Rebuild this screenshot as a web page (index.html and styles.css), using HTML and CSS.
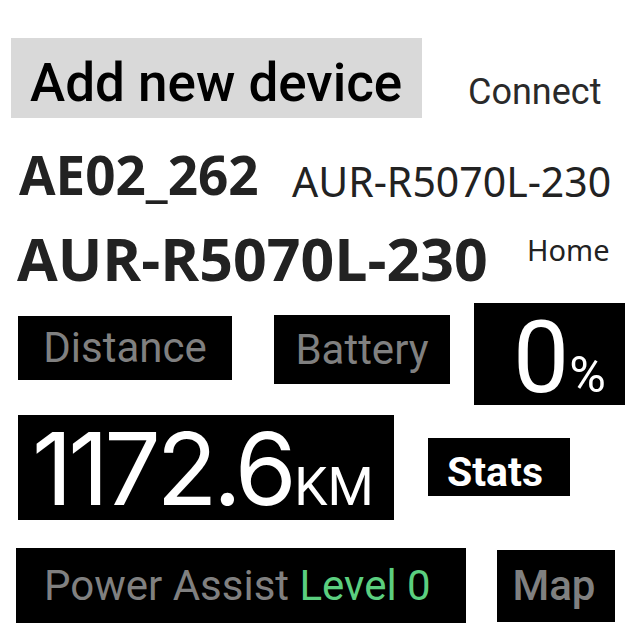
FILE: index.html
```html
<!DOCTYPE html>
<html>
<head>
<meta charset="utf-8">
<link rel="stylesheet" href="styles.css">
</head>
<body>
<div class="page">
  <div class="row r1">
    <div class="add">Add new device</div>
    <div class="connect">Connect</div>
  </div>
  <div class="row r2">
    <div class="dev-id">AE02_262</div>
    <div class="dev-model">AUR-R5070L-230</div>
  </div>
  <div class="row r3">
    <div class="dev-title">AUR-R5070L-230</div>
    <div class="home">Home</div>
  </div>
  <div class="row r4">
    <div class="tile label distance">Distance</div>
    <div class="tile label battery">Battery</div>
    <div class="tile pct"><span class="big">0</span><span class="unit">%</span></div>
  </div>
  <div class="row r5">
    <div class="tile km"><span class="big nums">1172.6</span><span class="unit-km">KM</span></div>
    <div class="tile stats">Stats</div>
  </div>
  <div class="row r6">
    <div class="tile label power">Power Assist&nbsp;<span class="level">Level 0</span></div>
    <div class="tile label map">Map</div>
  </div>
</div>
</body>
</html>
```
FILE: styles.css
```css
html, body {
  margin: 0;
  padding: 0;
  background: #ffffff;
}
.page {
  width: 640px;
  height: 640px;
  padding-top: 38px;
  box-sizing: border-box;
  font-family: Roboto, "Liberation Sans", sans-serif;
  overflow: hidden;
}
.row {
  display: flex;
  align-items: flex-start;
}
.r1 { height: 80px; }
.add {
  margin-left: 11px;
  width: 411px;
  height: 80px;
  box-sizing: border-box;
  background: #d9d9d9;
  color: #000;
  font-size: 53px;
  font-weight: 500;
  letter-spacing: 0;
  line-height: 70px;
  padding-top: 10px;
  padding-left: 19px;
  white-space: nowrap;
}
.connect {
  margin-left: 46px;
  margin-top: 36px;
  font-size: 36px;
  line-height: 36px;
  color: #2a2a2a;
}
.r2 { height: 92px; }
.dev-id {
  margin-left: 19px;
  width: 273px;
  margin-top: 30px;
  font-family: "Open Sans", "Noto Sans", sans-serif;
  font-weight: 700;
  font-size: 53px;
  line-height: 53px;
  color: #222;
  white-space: nowrap;
}
.dev-model {
  margin-top: 43px;
  font-family: "Noto Sans", "Open Sans", sans-serif;
  font-size: 41px;
  line-height: 41px;
  color: #222;
  white-space: nowrap;
}
.r3 { height: 90px; }
.dev-title {
  margin-left: 17px;
  width: 510px;
  margin-top: 18px;
  font-family: "Open Sans", "Noto Sans", sans-serif;
  font-weight: 700;
  font-size: 59px;
  line-height: 60px;
  color: #222;
  white-space: nowrap;
}
.home {
  margin-top: 25px;
  font-family: "Noto Sans", "Open Sans", sans-serif;
  font-size: 29px;
  line-height: 29px;
  color: #222;
}
.tile {
  background: #000;
  display: flex;
  align-items: center;
  justify-content: center;
  box-sizing: border-box;
  white-space: nowrap;
}
.label {
  color: #808080;
  font-size: 42px;
  line-height: 42px;
}
.r4 { height: 105px; }
.distance {
  margin-left: 18px;
  margin-top: 16px;
  width: 214px;
  height: 64px;
}
.battery {
  margin-left: 42px;
  margin-top: 15px;
  width: 176px;
  height: 69px;
}
.pct {
  margin-left: 24px;
  margin-top: 3px;
  width: 151px;
  height: 102px;
  display: block;
  padding-top: 5px;
  padding-left: 39px;
  color: #fff;
  font-size: 100px;
  line-height: 100px;
}
.unit {
  font-size: 50px;
}
.r5 { height: 115px; }
.km {
  margin-left: 18px;
  margin-top: 10px;
  width: 376px;
  height: 105px;
  display: block;
  padding-top: 4px;
  padding-left: 14px;
  color: #fff;
  font-size: 100px;
  line-height: 100px;
}
.nums {
  font-family: Inter, Roboto, sans-serif;
  font-weight: 400;
  letter-spacing: -4.5px;
}
.unit-km {
  font-size: 53px;
  margin-left: 2px;
}
.stats {
  margin-left: 34px;
  margin-top: 33px;
  width: 142px;
  height: 58px;
  padding-right: 8px;
  padding-top: 10px;
  color: #fff;
  font-weight: 700;
  font-size: 41px;
  line-height: 41px;
}
.r6 { height: 103px; }
.power {
  margin-left: 16px;
  margin-top: 28px;
  width: 450px;
  height: 75px;
  justify-content: flex-start;
  padding-left: 28px;
}
.level {
  color: #5bcf7f;
}
.map {
  margin-left: 31px;
  margin-top: 30px;
  width: 118px;
  height: 72px;
  font-weight: 500;
  padding-right: 4px;
}
```
